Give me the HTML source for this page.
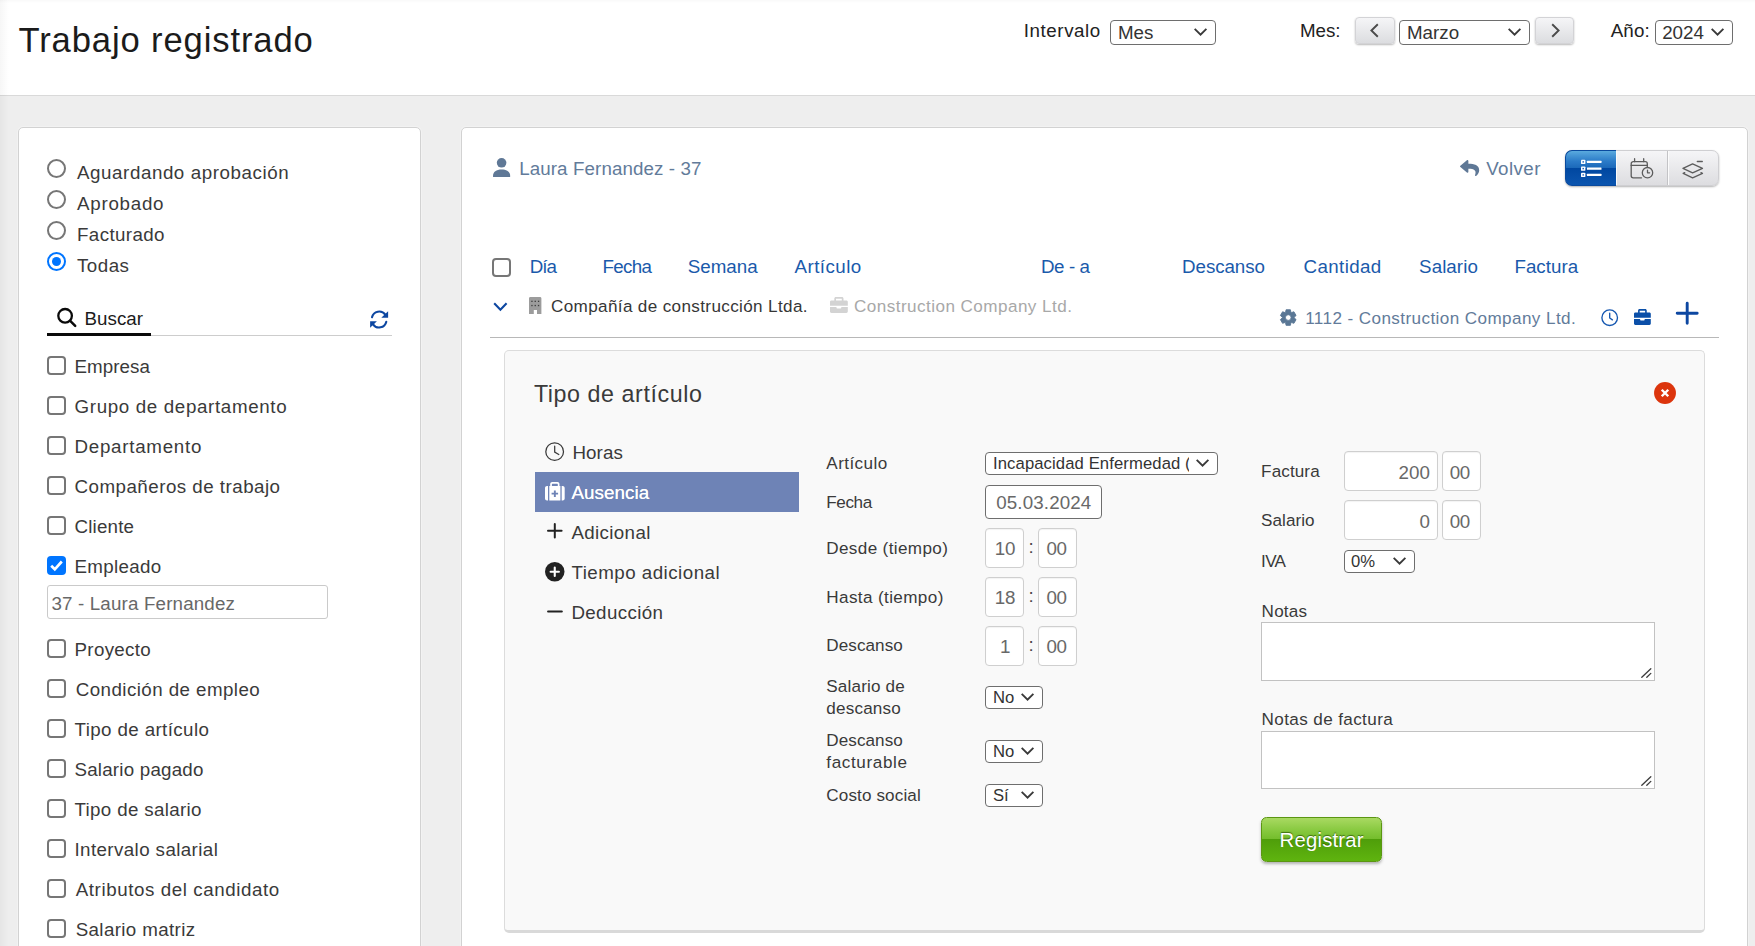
<!DOCTYPE html>
<html lang="es"><head><meta charset="utf-8"><title>Trabajo registrado</title>
<style>
*{box-sizing:border-box;margin:0;padding:0}
html,body{width:1755px;height:946px;overflow:hidden}
body{background:#eeeeee;font-family:"Liberation Sans",sans-serif;color:#333;position:relative}
.t{position:absolute;white-space:nowrap;line-height:1;color:#3a3a3a}
.i{position:absolute;display:block;overflow:visible}
div{position:absolute}
#hdr{left:0;top:0;width:1755px;height:96px;background:#fff;border-bottom:1px solid #d9d9d9}
#edge{left:0;top:0;width:9px;height:946px;background:linear-gradient(90deg,rgba(0,0,0,.035),rgba(0,0,0,0))}
#topsh{left:0;top:0;width:1755px;height:3px;background:linear-gradient(rgba(0,0,0,.022),rgba(0,0,0,0))}
#lp{left:18px;top:127px;width:403px;height:840px;background:#fff;border:1px solid #d2d2d2;border-radius:5px;box-shadow:0 0 0 1px rgba(255,255,255,.25)}
#rp{left:461px;top:127px;width:1287px;height:840px;background:#fff;border:1px solid #d2d2d2;border-radius:5px;box-shadow:0 0 0 1px rgba(255,255,255,.25)}
#fb{left:504px;top:350px;width:1201px;height:583px;background:#f9f9f9;border:1px solid #dcdcdc;border-bottom:3px solid #d9d9d9;border-radius:5px}
.sel{border:1px solid #6e6e6e;border-radius:4px;background:#fff}
.nb{border:1px solid #d3d3d6;border-radius:4px;background:linear-gradient(#f5f5f7,#dcdde0);box-shadow:0 1px 2px rgba(0,0,0,.28)}
.rad{border:2px solid #767676;border-radius:50%;background:#fff}
.rad.on{border:2px solid #0075ff}
.rad.on::after{content:"";position:absolute;left:3px;top:3px;right:3px;bottom:3px;border-radius:50%;background:#0075ff}
.cb{border:2px solid #767676;border-radius:4px;background:#fff}
.cb.on{border:0;background:#0075ff}
.cb svg{display:block}
.inp{border:1px solid #cacaca;border-radius:3px;background:#fff}
.inp2{border:1px solid #6e6e6e;border-radius:4px;background:#fff}
.inp3{border:1px solid #cfcfcf;border-radius:4px;background:#fff;box-shadow:inset 0 1px 1px rgba(0,0,0,.05)}
.ta{border:1px solid #c2c2c2;background:#fff}
.ta svg{position:absolute;right:2px;bottom:2px}
.bg{border-radius:7px;background:linear-gradient(#f5f5f7,#dddde0);border:1px solid #cfcfd2;box-shadow:0 1px 2px rgba(0,0,0,.3)}
.b1{border-radius:7px 0 0 7px;background:linear-gradient(#5aaade 0%,#2b7bc8 30%,#1c69ba 49%,#0047a0 50%,#0b55af 100%);border:1px solid #0a4a9e;border-right:0}
.reg{border-radius:5.500px;border:1px solid #5b9612;background:linear-gradient(#a9d962 0%,#86c83e 30%,#74bd2c 49%,#4f9e0a 50%,#5fb40f 100%);box-shadow:0 2px 3px rgba(0,0,0,.28)}
</style></head>
<body>
<div id="hdr">
<span class="t" style="left:18.5px;top:23px;font-size:34.6px;letter-spacing:0.88px;color:#1b1b1b;">Trabajo registrado</span>
<span class="t" style="left:1023.8px;top:22px;font-size:18.75px;letter-spacing:0.57px;color:#222;">Intervalo</span>
<div class="sel" style="left:1110px;top:20px;width:106px;height:25px;"></div>
<span class="t" style="left:1118px;top:24px;font-size:18.75px;color:#333;">Mes</span>
<svg class="i" style="left:1194.4px;top:28.1px;" width="13.1" height="8" viewBox="0 0 13.1 8" preserveAspectRatio="none"><path d="M.7 .9 6.55 6.7 12.4 .9" fill="none" stroke="#3a3a3a" stroke-width="1.9"/></svg>
<span class="t" style="left:1300.1px;top:22px;font-size:18.75px;letter-spacing:-0.11px;color:#222;">Mes:</span>
<div class="nb" style="left:1355px;top:17px;width:40px;height:27px;"></div>
<svg class="i" style="left:1368.5px;top:23px;" width="11" height="15" viewBox="0 0 11 15" preserveAspectRatio="none"><path d="M8.800 1.200 2.400 7.500 8.800 13.800" fill="none" stroke="#4a4a4a" stroke-width="1.900"/></svg>
<div class="sel" style="left:1399px;top:20px;width:131px;height:25px;"></div>
<span class="t" style="left:1407px;top:24px;font-size:18.75px;color:#333;">Marzo</span>
<svg class="i" style="left:1508.4px;top:28.1px;" width="13.1" height="8" viewBox="0 0 13.1 8" preserveAspectRatio="none"><path d="M.7 .9 6.55 6.7 12.4 .9" fill="none" stroke="#3a3a3a" stroke-width="1.9"/></svg>
<div class="nb" style="left:1535px;top:17px;width:39px;height:27px;"></div>
<svg class="i" style="left:1549.5px;top:23px;" width="11" height="15" viewBox="0 0 11 15" preserveAspectRatio="none"><path d="M2.200 1.200 8.600 7.500 2.200 13.800" fill="none" stroke="#4a4a4a" stroke-width="1.900"/></svg>
<span class="t" style="left:1610.7px;top:22px;font-size:18.75px;letter-spacing:0.18px;color:#222;">Año:</span>
<div class="sel" style="left:1655px;top:20px;width:78px;height:25px;"></div>
<span class="t" style="left:1662.2px;top:24px;font-size:18.75px;color:#333;">2024</span>
<svg class="i" style="left:1711.4px;top:28.1px;" width="13.1" height="8" viewBox="0 0 13.1 8" preserveAspectRatio="none"><path d="M.7 .9 6.55 6.7 12.4 .9" fill="none" stroke="#3a3a3a" stroke-width="1.9"/></svg>
</div>
<div id="lp">
<div class="rad" style="left:28px;top:31px;width:19px;height:19px;"></div>
<span class="t" style="left:58px;top:36px;font-size:18.75px;letter-spacing:0.57px;">Aguardando aprobación</span>
<div class="rad" style="left:28px;top:62px;width:19px;height:19px;"></div>
<span class="t" style="left:58px;top:67px;font-size:18.75px;letter-spacing:0.74px;">Aprobado</span>
<div class="rad" style="left:28px;top:93px;width:19px;height:19px;"></div>
<span class="t" style="left:58px;top:98px;font-size:18.75px;letter-spacing:0.38px;">Facturado</span>
<div class="rad on" style="left:28px;top:124px;width:19px;height:19px;"></div>
<span class="t" style="left:58px;top:129px;font-size:18.75px;letter-spacing:0.47px;">Todas</span>
<svg class="i" style="left:37.8px;top:180.2px;" width="19.5" height="19" viewBox="0 0 19.5 19" preserveAspectRatio="none"><circle cx="8.100" cy="7.800" r="6.800" fill="none" stroke="#0a0a0a" stroke-width="2.300"/><path d="M13.200 12.900 18.200 17.800" stroke="#0a0a0a" stroke-width="2.500" stroke-linecap="round"/></svg>
<span class="t" style="left:65.5px;top:182px;font-size:18.75px;letter-spacing:0.03px;color:#1b1b1b;">Buscar</span>
<div style="left:28px;top:207px;width:345px;height:1px;background:#cdcdcd;"></div>
<div style="left:28px;top:205px;width:104px;height:3px;background:#0a0a0a;"></div>
<svg class="i" style="left:350.8px;top:182.9px;" width="18.3" height="17" viewBox="0 0 18.3 17" preserveAspectRatio="none"><g fill="none" stroke="#0d47a1" stroke-width="2.100" stroke-linecap="round"><path d="M2 6.300A7.400 7.400 0 0 1 15.300 3.700"/><path d="M16.300 10.700A7.400 7.400 0 0 1 3 13.300"/></g><path d="M18.100 .2V6.800H11.300z" fill="#0d47a1"/><path d="M.15 16.800V10.300H6.900z" fill="#0d47a1"/></svg>
<div class="cb" style="left:28px;top:228px;width:19px;height:19px;"></div>
<span class="t" style="left:55.5px;top:230px;font-size:18.75px;letter-spacing:0.08px;">Empresa</span>
<div class="cb" style="left:28px;top:268px;width:19px;height:19px;"></div>
<span class="t" style="left:55.5px;top:270px;font-size:18.75px;letter-spacing:0.65px;">Grupo de departamento</span>
<div class="cb" style="left:28px;top:308px;width:19px;height:19px;"></div>
<span class="t" style="left:55.5px;top:310px;font-size:18.75px;letter-spacing:0.73px;">Departamento</span>
<div class="cb" style="left:28px;top:348px;width:19px;height:19px;"></div>
<span class="t" style="left:55.5px;top:350px;font-size:18.75px;letter-spacing:0.48px;">Compañeros de trabajo</span>
<div class="cb" style="left:28px;top:388px;width:19px;height:19px;"></div>
<span class="t" style="left:55.5px;top:390px;font-size:18.75px;letter-spacing:0.19px;">Cliente</span>
<div class="cb on" style="left:28px;top:428px;width:19px;height:19px;"><svg width="19" height="19" viewBox="0 0 19 19"><path d="M4.200 9.700 7.800 13.300 14.800 5.500" fill="none" stroke="#fff" stroke-width="2.700"/></svg></div>
<span class="t" style="left:55.5px;top:430px;font-size:18.75px;letter-spacing:0.32px;">Empleado</span>
<div class="cb" style="left:28px;top:511px;width:19px;height:19px;"></div>
<span class="t" style="left:55.5px;top:513px;font-size:18.75px;letter-spacing:0.32px;">Proyecto</span>
<div class="cb" style="left:28px;top:551px;width:19px;height:19px;"></div>
<span class="t" style="left:56.7px;top:553px;font-size:18.75px;letter-spacing:0.44px;">Condición de empleo</span>
<div class="cb" style="left:28px;top:591px;width:19px;height:19px;"></div>
<span class="t" style="left:55.5px;top:593px;font-size:18.75px;letter-spacing:0.39px;">Tipo de artículo</span>
<div class="cb" style="left:28px;top:631px;width:19px;height:19px;"></div>
<span class="t" style="left:55.5px;top:633px;font-size:18.75px;letter-spacing:0.21px;">Salario pagado</span>
<div class="cb" style="left:28px;top:671px;width:19px;height:19px;"></div>
<span class="t" style="left:55.5px;top:673px;font-size:18.75px;letter-spacing:0.33px;">Tipo de salario</span>
<div class="cb" style="left:28px;top:711px;width:19px;height:19px;"></div>
<span class="t" style="left:55.5px;top:713px;font-size:18.75px;letter-spacing:0.4px;">Intervalo salarial</span>
<div class="cb" style="left:28px;top:751px;width:19px;height:19px;"></div>
<span class="t" style="left:56.7px;top:753px;font-size:18.75px;letter-spacing:0.58px;">Atributos del candidato</span>
<div class="cb" style="left:28px;top:791px;width:19px;height:19px;"></div>
<span class="t" style="left:56.7px;top:793px;font-size:18.75px;letter-spacing:0.37px;">Salario matriz</span>
<div class="inp" style="left:28px;top:457px;width:281px;height:34px;"></div>
<span class="t" style="left:32.4px;top:467px;font-size:18.75px;letter-spacing:0.17px;color:#686868;">37 - Laura Fernandez</span>
</div>
<div id="rp">
<svg class="i" style="left:31px;top:30.2px;" width="17.2" height="19.1" viewBox="0 0 17.2 19.1" preserveAspectRatio="none"><circle cx="8.600" cy="4.800" r="4.800" fill="#5f7896"/><path d="M0 17.900C0 13.700 3.300 11.400 8.600 11.400s8.600 2.300 8.600 6.500v.500c0 .400-.300.700-.700.700H.700c-.400 0-.700-.300-.700-.700z" fill="#5f7896"/></svg>
<span class="t" style="left:57.2px;top:32px;font-size:18.75px;letter-spacing:0.1px;color:#627b9a;">Laura Fernandez - 37</span>
<svg class="i" style="left:998px;top:31.7px;" width="19.2" height="16.2" viewBox="0 0 19.500 17.300" preserveAspectRatio="none"><path d="M.4 6.100 7 .3C7.600-.200 8.500.200 8.500 1v3.100c6.100.100 11 1.300 11 7.100 0 2.300-1.500 4.600-3.200 5.800-.5.400-1.200-.100-1-.700 1.700-5.500-.8-6.900-6.800-7v3.400c0 .800-.900 1.200-1.500.700L.4 7.500c-.5-.400-.5-1 0-1.400z" fill="#5f7896"/></svg>
<span class="t" style="left:1024.2px;top:32px;font-size:18.75px;letter-spacing:0.42px;color:#627b9a;">Volver</span>
<div class="bg" style="left:1103px;top:22px;width:154px;height:36px;"></div>
<div class="b1" style="left:1103px;top:22px;width:51px;height:36px;"></div>
<div style="left:1154px;top:23px;width:1px;height:34px;background:#fbfbfb;"></div>
<div style="left:1205px;top:23px;width:1px;height:34px;background:#c3c3c6;"></div>
<div style="left:1206px;top:23px;width:1px;height:34px;background:#fbfbfb;"></div>
<svg class="i" style="left:1119px;top:30px;" width="20.5" height="19.5" viewBox="0 0 20.5 19.5" preserveAspectRatio="none"><g fill="#fff"><rect x="5.900" y="2.800" width="14.600" height="2.200" rx=".5"/><rect x="5.900" y="9.500" width="14.600" height="2.200" rx=".5"/><rect x="5.900" y="15.800" width="14.600" height="2.200" rx=".5"/><rect x="0" y="1.700" width="4.400" height="4.400" rx=".9"/><rect x="0" y="8.400" width="4.400" height="4.400" rx=".9"/><rect x="0" y="14.700" width="4.400" height="4.400" rx=".9"/></g><g fill="#1458b3"><rect x="1.500" y="3.200" width="1.400" height="1.400"/><rect x="1.500" y="9.900" width="1.400" height="1.400"/><rect x="1.500" y="16.200" width="1.400" height="1.400"/></g></svg>
<svg class="i" style="left:1168px;top:30px;" width="24" height="21" viewBox="0 0 24 21" preserveAspectRatio="none"><g fill="none" stroke="#5c5c5c" stroke-width="1.300" stroke-linecap="round" stroke-linejoin="round"><path d="M17.300 8.900V5.700a2 2 0 0 0-2-2H3.200a2 2 0 0 0-2 2v12.100a2 2 0 0 0 2 2h8.300"/><path d="M1.200 7.400h16.100M4.600 .7v3M13.700 .7v3"/><circle cx="17.500" cy="14.700" r="5.200"/><path d="M17.500 12.200v2.600h2.100"/></g></svg>
<svg class="i" style="left:1220px;top:31px;" width="22" height="20" viewBox="0 0 22 20" preserveAspectRatio="none"><g fill="none" stroke="#5c5c5c" stroke-width="1.300" stroke-linecap="round" stroke-linejoin="round"><path d="M10.600 4.800 1 9.400l9.600 4.400 9.900-4.400z"/><path d="M2.700 13.600 1.200 14.400l9.400 4.500 9.900-4.500-1.500-.8"/><path d="M15.300 2.500h5"/></g></svg>
<div class="cb" style="left:30px;top:130px;width:19px;height:19px;"></div>
<span class="t" style="left:67.7px;top:130px;font-size:18.75px;letter-spacing:-0.94px;color:#1a5aab;">Día</span>
<span class="t" style="left:140.4px;top:130px;font-size:18.75px;letter-spacing:-0.63px;color:#1a5aab;">Fecha</span>
<span class="t" style="left:225.7px;top:130px;font-size:18.75px;letter-spacing:0.03px;color:#1a5aab;">Semana</span>
<span class="t" style="left:332.5px;top:130px;font-size:18.75px;letter-spacing:0.45px;color:#1a5aab;">Artículo</span>
<span class="t" style="left:579px;top:130px;font-size:18.75px;letter-spacing:-0.43px;color:#1a5aab;">De - a</span>
<span class="t" style="left:720.1px;top:130px;font-size:18.75px;letter-spacing:-0.08px;color:#1a5aab;">Descanso</span>
<span class="t" style="left:841.5px;top:130px;font-size:18.75px;letter-spacing:0.38px;color:#1a5aab;">Cantidad</span>
<span class="t" style="left:957.1px;top:130px;font-size:18.75px;letter-spacing:0.06px;color:#1a5aab;">Salario</span>
<span class="t" style="left:1052.4px;top:130px;font-size:18.75px;letter-spacing:0.04px;color:#1a5aab;">Factura</span>
<svg class="i" style="left:31px;top:173.6px;" width="14.8" height="9.5" viewBox="0 0 14.8 9.5" preserveAspectRatio="none"><path d="M1.200 1.300 7.400 7.700 13.600 1.300" fill="none" stroke="#0d47a1" stroke-width="2.100"/></svg>
<svg class="i" style="left:67.1px;top:169.1px;" width="12.4" height="16.9" viewBox="0 0 12.4 16.9" preserveAspectRatio="none"><path d="M1.400 0h9.600c.800 0 1.400.600 1.400 1.400V16.900H8v-4H4.800v4H0V1.400C0 .600.600 0 1.400 0z" fill="#9c9c9c"/><g fill="#3d3d3d"><rect x="2.3" y="3.7" width="1.300" height="1.300"/><rect x="5.6" y="3.7" width="1.300" height="1.300"/><rect x="8.9" y="3.7" width="1.300" height="1.300"/><rect x="2.3" y="7.9" width="1.300" height="1.300"/><rect x="5.6" y="7.9" width="1.300" height="1.300"/><rect x="8.9" y="7.9" width="1.300" height="1.300"/></g></svg>
<span class="t" style="left:89px;top:170px;font-size:17.1px;letter-spacing:0.36px;color:#363636;">Compañía de construcción Ltda.</span>
<svg class="i" style="left:367.8px;top:169px;" width="17.8" height="16" viewBox="0 0 17.8 16" preserveAspectRatio="none"><path d="M4.300 1.600C4.300.700 5 0 5.900 0h6c.900 0 1.600.700 1.600 1.600v1.800h2.900c.800 0 1.400.600 1.400 1.400v3.900H0V4.800c0-.800.600-1.400 1.400-1.400h2.900zM6 1.700v1.700h5.800V1.700zM0 9.900h6.500v.900c0 .400.300.700.700.700h3.400c.400 0 .700-.300.700-.700v-.900h6.500v4.700c0 .800-.600 1.400-1.400 1.400H1.400C.600 16 0 15.400 0 14.600z" fill="#d3d3d3"/></svg>
<span class="t" style="left:392px;top:170px;font-size:17.1px;letter-spacing:0.45px;color:#a8a8a8;">Construction Company Ltd.</span>
<svg class="i" style="left:818.1px;top:180.9px;" width="16.5" height="17.1" viewBox="0 0 16.5 17.1" preserveAspectRatio="none"><path d="M10.93 3.29 L10.41 0.74 L6.09 0.74 L5.57 3.29 L5.04 3.6 L2.57 2.77 L0.41 6.52 L2.36 8.24 L2.36 8.86 L0.41 10.58 L2.57 14.33 L5.04 13.5 L5.57 13.81 L6.09 16.36 L10.41 16.36 L10.93 13.81 L11.46 13.5 L13.93 14.33 L16.09 10.58 L14.14 8.86 L14.14 8.24 L16.09 6.52 L13.93 2.77 L11.46 3.6ZM5.4 8.55a2.85 2.85 0 1 0 5.7 0a2.85 2.85 0 1 0 -5.7 0z" fill="#5a7795" fill-rule="evenodd" stroke="#5a7795" stroke-width=".9" stroke-linejoin="round"/></svg>
<span class="t" style="left:843.2px;top:182px;font-size:17.1px;letter-spacing:0.41px;color:#627b9a;">1112 - Construction Company Ltd.</span>
<svg class="i" style="left:1139px;top:181px;" width="17.4" height="17.4" viewBox="0 0 17.4 17.4" preserveAspectRatio="none"><g fill="none" stroke="#1557b0" stroke-width="1.350" stroke-linecap="round"><circle cx="8.700" cy="8.700" r="7.800"/><path d="M8.700 4.200V9l2.700 1.900"/></g></svg>
<svg class="i" style="left:1171.8px;top:181.1px;" width="16.8" height="16" viewBox="0 0 17.800 16" preserveAspectRatio="none"><path d="M4.300 1.600C4.300.700 5 0 5.900 0h6c.900 0 1.600.700 1.600 1.600v1.800h2.900c.800 0 1.400.600 1.400 1.400v3.900H0V4.800c0-.800.600-1.400 1.400-1.400h2.900zM6 1.700v1.700h5.800V1.700zM0 9.900h6.500v.900c0 .400.300.700.700.700h3.400c.400 0 .700-.300.700-.700v-.900h6.500v4.700c0 .800-.600 1.400-1.400 1.400H1.400C.600 16 0 15.400 0 14.600z" fill="#0b4fa8"/></svg>
<svg class="i" style="left:1214.3px;top:174px;" width="22.4" height="22.4" viewBox="0 0 22.4 22.4" preserveAspectRatio="none"><path d="M11.200 1.200v20M1.200 11.200h20" stroke="#0d47a1" stroke-width="2.900" stroke-linecap="round"/></svg>
<div style="left:28px;top:209px;width:1229px;height:1px;background:#b8b8b8;"></div>
</div>
<div id="fb">
<span class="t" style="left:28.9px;top:32px;font-size:23.25px;letter-spacing:0.57px;">Tipo de artículo</span>
<svg class="i" style="left:1149px;top:30.75px;" width="22" height="22" viewBox="0 0 22 22" preserveAspectRatio="none"><circle cx="11" cy="11" r="10.950" fill="#dc350d"/><path d="M7.750 7.750l6.500 6.500M14.250 7.750l-6.500 6.500" stroke="#fff" stroke-width="2.400"/></svg>
<div style="left:30px;top:121px;width:264px;height:40px;background:#6e83b6;"></div>
<svg class="i" style="left:40px;top:91px;" width="19.3" height="19.3" viewBox="0 0 19.3 19.3" preserveAspectRatio="none"><g fill="none" stroke="#3a3a3a" stroke-width="1.250" stroke-linecap="round"><circle cx="9.650" cy="9.650" r="8.850"/><path d="M9.700 4.200v5.900l4.100 2.400"/></g></svg>
<span class="t" style="left:67.4px;top:93px;font-size:18.75px;letter-spacing:0.1px;">Horas</span>
<svg class="i" style="left:40px;top:131.1px;" width="19.7" height="18.5" viewBox="0 0 19.7 18.5" preserveAspectRatio="none"><path d="M5.200 4.100V2c0-1.100.9-2 2-2h5.300c1.100 0 2 .9 2 2v2.100h-1.700V2.300c0-.3-.2-.5-.5-.5H7.400c-.3 0-.5.200-.5.500v1.800z" fill="#fff"/><path d="M2 4.100h1v14.400H2c-1.100 0-2-.9-2-2V6.100c0-1.100.9-2 2-2zM16.700 4.100h1c1.100 0 2 .9 2 2v10.400c0 1.100-.9 2-2 2h-1zM4.300 4.100h11.100v14.400H4.300z" fill="#fff"/><path d="M8.900 8.400h1.900v2.300h2.300v1.900h-2.300v2.300H8.900v-2.300H6.600v-1.900h2.300z" fill="#6e83b6"/></svg>
<span class="t" style="left:66.4px;top:133px;font-size:18.75px;letter-spacing:0.08px;color:#fff;text-shadow:0 0 .6px #fff;">Ausencia</span>
<svg class="i" style="left:42px;top:172.3px;" width="15.6" height="15.6" viewBox="0 0 15.6 15.6" preserveAspectRatio="none"><path d="M7.800 1v13.600M1 7.800h13.600" stroke="#222" stroke-width="2" stroke-linecap="round"/></svg>
<span class="t" style="left:66.4px;top:173px;font-size:18.75px;letter-spacing:0.36px;">Adicional</span>
<svg class="i" style="left:40px;top:211px;" width="19.5" height="19.5" viewBox="0 0 19.5 19.5" preserveAspectRatio="none"><circle cx="9.750" cy="9.750" r="9.750" fill="#222"/><path d="M9.750 5.600v8.300M5.600 9.750h8.300" stroke="#fff" stroke-width="2.100" stroke-linecap="round"/></svg>
<span class="t" style="left:66.4px;top:213px;font-size:18.75px;letter-spacing:0.48px;">Tiempo adicional</span>
<svg class="i" style="left:42px;top:258.9px;" width="16" height="3" viewBox="0 0 16 3" preserveAspectRatio="none"><path d="M1.100 1.500h13.700" stroke="#222" stroke-width="2.100" stroke-linecap="round"/></svg>
<span class="t" style="left:66.4px;top:253px;font-size:18.75px;letter-spacing:0.38px;">Deducción</span>
<span class="t" style="left:321.3px;top:104px;font-size:17.1px;letter-spacing:0.43px;">Artículo</span>
<span class="t" style="left:321.3px;top:143px;font-size:17.1px;letter-spacing:-0.41px;">Fecha</span>
<span class="t" style="left:321.3px;top:189px;font-size:17.1px;letter-spacing:0.36px;">Desde (tiempo)</span>
<span class="t" style="left:321.3px;top:238px;font-size:17.1px;letter-spacing:0.38px;">Hasta (tiempo)</span>
<span class="t" style="left:321.3px;top:286px;font-size:17.1px;letter-spacing:0.07px;">Descanso</span>
<span class="t" style="left:321.3px;top:327px;font-size:17.1px;letter-spacing:0.17px;">Salario de</span>
<span class="t" style="left:321.3px;top:349px;font-size:17.1px;letter-spacing:0.19px;">descanso</span>
<span class="t" style="left:321.3px;top:381px;font-size:17.1px;letter-spacing:0.07px;">Descanso</span>
<span class="t" style="left:321.3px;top:403px;font-size:17.1px;letter-spacing:0.62px;">facturable</span>
<span class="t" style="left:321.3px;top:436px;font-size:17.1px;letter-spacing:0.12px;">Costo social</span>
<div class="sel" style="left:480px;top:101px;width:233px;height:23px;"></div>
<span class="t" style="left:488px;top:105px;font-size:16.67px;letter-spacing:0.1px;color:#333;width:196px;overflow:hidden;">Incapacidad Enfermedad (</span>
<svg class="i" style="left:691.4px;top:108.3px;" width="13.1" height="8" viewBox="0 0 13.1 8" preserveAspectRatio="none"><path d="M.7 .9 6.55 6.7 12.4 .9" fill="none" stroke="#3a3a3a" stroke-width="1.9"/></svg>
<div class="inp2" style="left:480px;top:134px;width:117px;height:34px;"></div>
<span class="t" style="left:491.2px;top:143px;font-size:18.75px;letter-spacing:0.14px;color:#686868;">05.03.2024</span>
<div class="inp3" style="left:480px;top:177px;width:39px;height:40px;"></div>
<div class="inp3" style="left:533px;top:177px;width:39px;height:40px;"></div>
<span class="t" style="left:489.67px;top:189px;font-size:18.75px;color:#686868;">10</span>
<span class="t" style="left:541.6px;top:189px;font-size:18.75px;letter-spacing:-0.56px;color:#686868;">00</span>
<span class="t" style="left:523.4px;top:187px;font-size:18.75px;color:#4a4a4a;">:</span>
<div class="inp3" style="left:480px;top:226px;width:39px;height:40px;"></div>
<div class="inp3" style="left:533px;top:226px;width:39px;height:40px;"></div>
<span class="t" style="left:489.67px;top:238px;font-size:18.75px;color:#686868;">18</span>
<span class="t" style="left:541.6px;top:238px;font-size:18.75px;letter-spacing:-0.56px;color:#686868;">00</span>
<span class="t" style="left:523.4px;top:236px;font-size:18.75px;color:#4a4a4a;">:</span>
<div class="inp3" style="left:480px;top:275px;width:39px;height:40px;"></div>
<div class="inp3" style="left:533px;top:275px;width:39px;height:40px;"></div>
<span class="t" style="left:494.89px;top:287px;font-size:18.75px;color:#686868;">1</span>
<span class="t" style="left:541.6px;top:287px;font-size:18.75px;letter-spacing:-0.56px;color:#686868;">00</span>
<span class="t" style="left:523.4px;top:285px;font-size:18.75px;color:#4a4a4a;">:</span>
<div class="sel" style="left:480px;top:335px;width:58px;height:23px;"></div>
<span class="t" style="left:488px;top:339px;font-size:16.67px;color:#333;">No</span>
<svg class="i" style="left:516.4px;top:342.3px;" width="13.1" height="8" viewBox="0 0 13.1 8" preserveAspectRatio="none"><path d="M.7 .9 6.55 6.7 12.4 .9" fill="none" stroke="#3a3a3a" stroke-width="1.9"/></svg>
<div class="sel" style="left:480px;top:389px;width:58px;height:23px;"></div>
<span class="t" style="left:488px;top:393px;font-size:16.67px;color:#333;">No</span>
<svg class="i" style="left:516.4px;top:396.3px;" width="13.1" height="8" viewBox="0 0 13.1 8" preserveAspectRatio="none"><path d="M.7 .9 6.55 6.7 12.4 .9" fill="none" stroke="#3a3a3a" stroke-width="1.9"/></svg>
<div class="sel" style="left:480px;top:433px;width:58px;height:23px;"></div>
<span class="t" style="left:488px;top:437px;font-size:16.67px;color:#333;">Sí</span>
<svg class="i" style="left:516.4px;top:440.3px;" width="13.1" height="8" viewBox="0 0 13.1 8" preserveAspectRatio="none"><path d="M.7 .9 6.55 6.7 12.4 .9" fill="none" stroke="#3a3a3a" stroke-width="1.9"/></svg>
<span class="t" style="left:756.1px;top:112px;font-size:17.1px;letter-spacing:0.1px;">Factura</span>
<span class="t" style="left:756.1px;top:161px;font-size:17.1px;letter-spacing:0.03px;">Salario</span>
<span class="t" style="left:756.1px;top:202px;font-size:17.1px;letter-spacing:-0.7px;">IVA</span>
<div class="inp3" style="left:839px;top:100px;width:94px;height:40px;"></div>
<div class="inp3" style="left:937px;top:100px;width:39px;height:40px;"></div>
<span class="t" style="left:893.6px;top:113px;font-size:18.75px;letter-spacing:0.01px;color:#686868;">200</span>
<span class="t" style="left:944.8px;top:113px;font-size:18.75px;letter-spacing:-0.56px;color:#686868;">00</span>
<div class="inp3" style="left:839px;top:149px;width:94px;height:40px;"></div>
<div class="inp3" style="left:937px;top:149px;width:39px;height:40px;"></div>
<span class="t" style="left:914.47px;top:162px;font-size:18.75px;color:#686868;">0</span>
<span class="t" style="left:944.8px;top:162px;font-size:18.75px;letter-spacing:-0.56px;color:#686868;">00</span>
<div class="sel" style="left:839px;top:199px;width:71px;height:23px;"></div>
<span class="t" style="left:846px;top:203px;font-size:16.67px;color:#333;">0%</span>
<svg class="i" style="left:888.4px;top:206.3px;" width="13.1" height="8" viewBox="0 0 13.1 8" preserveAspectRatio="none"><path d="M.7 .9 6.55 6.7 12.4 .9" fill="none" stroke="#3a3a3a" stroke-width="1.9"/></svg>
<span class="t" style="left:756.6px;top:252px;font-size:17.1px;letter-spacing:0.21px;">Notas</span>
<div class="ta" style="left:756px;top:271px;width:394px;height:59px;"><svg width="11" height="10" viewBox="0 0 11 10"><path d="M.8 9.300 9.800 .8M5.800 9.300 9.800 5.400" stroke="#3c3c3c" stroke-width="1.300" stroke-linecap="round"/></svg></div>
<span class="t" style="left:756.6px;top:360px;font-size:17.1px;letter-spacing:0.38px;">Notas de factura</span>
<div class="ta" style="left:756px;top:380px;width:394px;height:58px;"><svg width="11" height="10" viewBox="0 0 11 10"><path d="M.8 9.300 9.800 .8M5.800 9.300 9.800 5.400" stroke="#3c3c3c" stroke-width="1.300" stroke-linecap="round"/></svg></div>
<div class="reg" style="left:756px;top:466px;width:121px;height:45px;"></div>
<span class="t" style="left:774.5px;top:479px;font-size:20.3px;letter-spacing:0.23px;color:#fff;text-shadow:0 -1px 1px rgba(30,70,0,.7);">Registrar</span>
</div>
<div id="edge"></div>
<div id="topsh"></div>
</body></html>
